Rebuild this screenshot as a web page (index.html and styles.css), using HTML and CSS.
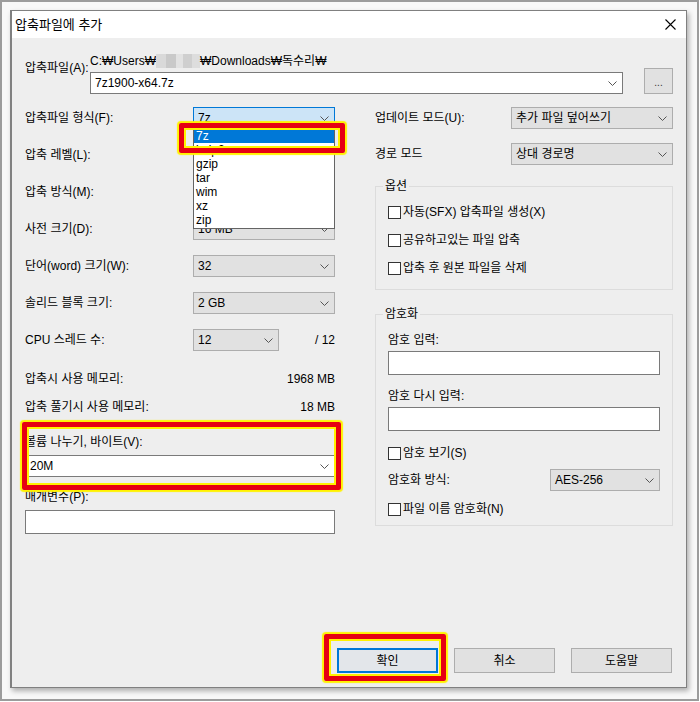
FILE: index.html
```html
<!DOCTYPE html>
<html lang="ko">
<head>
<meta charset="utf-8">
<title>압축파일에 추가</title>
<link rel="stylesheet" href="styles.css">
</head>
<body>
<div class="frame">
  <div class="window">
    <div class="titlebar">
      <span class="title">압축파일에 추가</span>
      <svg class="close" width="11" height="11" viewBox="0 0 11 11"><path d="M0.5 0.5L10.5 10.5M10.5 0.5L0.5 10.5" stroke="#000" stroke-width="1.1" fill="none"/></svg>
    </div>
    <div class="content">
      <div class="file-row">
        <div class="file-label">압축파일(A):</div>
        <div class="file-col">
          <div class="path">C:₩Users₩<span class="blur"></span>₩Downloads₩독수리₩</div>
          <div class="combo-row">
            <div class="select white file-combo"><span>7z1900-x64.7z</span><svg class="chev" width="9" height="5" viewBox="0 0 9 5"><path d="M0.5 0.5L4.5 4.5L8.5 0.5" fill="none" stroke="#555"/></svg></div>
            <div class="btn browse">...</div>
          </div>
        </div>
      </div>

      <div class="columns">
        <div class="left">
          <div class="srow">
            <span class="slabel">압축파일 형식(F):</span>
            <div class="select open w142"><span>7z</span><svg class="chev" width="9" height="5" viewBox="0 0 9 5"><path d="M0.5 0.5L4.5 4.5L8.5 0.5" fill="none" stroke="#555"/></svg>
              <div class="dropdown">
                <div class="opt sel">7z</div>
                <div class="opt">bzip2</div>
                <div class="opt">gzip</div>
                <div class="opt">tar</div>
                <div class="opt">wim</div>
                <div class="opt">xz</div>
                <div class="opt">zip</div>
              </div>
            </div>
          </div>
          <div class="srow">
            <span class="slabel">압축 레벨(L):</span>
            <div class="select w142"><span></span><svg class="chev" width="9" height="5" viewBox="0 0 9 5"><path d="M0.5 0.5L4.5 4.5L8.5 0.5" fill="none" stroke="#555"/></svg></div>
          </div>
          <div class="srow">
            <span class="slabel">압축 방식(M):</span>
            <div class="select w142"><span></span><svg class="chev" width="9" height="5" viewBox="0 0 9 5"><path d="M0.5 0.5L4.5 4.5L8.5 0.5" fill="none" stroke="#555"/></svg></div>
          </div>
          <div class="srow">
            <span class="slabel">사전 크기(D):</span>
            <div class="select w142"><span>16 MB</span><svg class="chev" width="9" height="5" viewBox="0 0 9 5"><path d="M0.5 0.5L4.5 4.5L8.5 0.5" fill="none" stroke="#555"/></svg></div>
          </div>
          <div class="srow">
            <span class="slabel">단어(word) 크기(W):</span>
            <div class="select w142"><span>32</span><svg class="chev" width="9" height="5" viewBox="0 0 9 5"><path d="M0.5 0.5L4.5 4.5L8.5 0.5" fill="none" stroke="#555"/></svg></div>
          </div>
          <div class="srow">
            <span class="slabel">솔리드 블록 크기:</span>
            <div class="select w142"><span>2 GB</span><svg class="chev" width="9" height="5" viewBox="0 0 9 5"><path d="M0.5 0.5L4.5 4.5L8.5 0.5" fill="none" stroke="#555"/></svg></div>
          </div>
          <div class="srow">
            <span class="slabel">CPU 스레드 수:</span>
            <div class="select w86"><span>12</span><svg class="chev" width="9" height="5" viewBox="0 0 9 5"><path d="M0.5 0.5L4.5 4.5L8.5 0.5" fill="none" stroke="#555"/></svg></div>
            <span class="threads">/ 12</span>
          </div>
          <div class="mem mem1"><span>압축시 사용 메모리:</span><span>1968 MB</span></div>
          <div class="mem mem2"><span>압축 풀기시 사용 메모리:</span><span>18 MB</span></div>
          <div class="vol-label">볼륨 나누기, 바이트(V):</div>
          <div class="select white vol-combo"><span>20M</span><svg class="chev" width="9" height="5" viewBox="0 0 9 5"><path d="M0.5 0.5L4.5 4.5L8.5 0.5" fill="none" stroke="#555"/></svg></div>
          <div class="param-label">매개변수(P):</div>
          <div class="input param-input"></div>
        </div>

        <div class="right">
          <div class="rrow">
            <span class="rlabel">업데이트 모드(U):</span>
            <div class="select w162"><span>추가 파일 덮어쓰기</span><svg class="chev" width="9" height="5" viewBox="0 0 9 5"><path d="M0.5 0.5L4.5 4.5L8.5 0.5" fill="none" stroke="#555"/></svg></div>
          </div>
          <div class="rrow rrow2">
            <span class="rlabel">경로 모드</span>
            <div class="select w162"><span>상대 경로명</span><svg class="chev" width="9" height="5" viewBox="0 0 9 5"><path d="M0.5 0.5L4.5 4.5L8.5 0.5" fill="none" stroke="#555"/></svg></div>
          </div>
          <fieldset class="group options">
            <legend>옵션</legend>
            <div class="cbrow"><span class="cb"></span><span>자동(SFX) 압축파일 생성(X)</span></div>
            <div class="cbrow gap14"><span class="cb"></span><span>공유하고있는 파일 압축</span></div>
            <div class="cbrow gap14"><span class="cb"></span><span>압축 후 원본 파일을 삭제</span></div>
          </fieldset>
          <fieldset class="group enc">
            <legend>암호화</legend>
            <div class="enc-label">암호 입력:</div>
            <div class="input pw"></div>
            <div class="enc-label enc-label2">암호 다시 입력:</div>
            <div class="input pw"></div>
            <div class="cbrow show-pw"><span class="cb"></span><span>암호 보기(S)</span></div>
            <div class="method-row">
              <span>암호화 방식:</span>
              <div class="select w110"><span>AES-256</span><svg class="chev" width="9" height="5" viewBox="0 0 9 5"><path d="M0.5 0.5L4.5 4.5L8.5 0.5" fill="none" stroke="#555"/></svg></div>
            </div>
            <div class="cbrow enc-names"><span class="cb"></span><span>파일 이름 암호화(N)</span></div>
          </fieldset>
        </div>
      </div>

      <div class="buttons">
        <div class="btn action default">확인</div>
        <div class="btn action">취소</div>
        <div class="btn action">도움말</div>
      </div>
    </div>

    <div class="hl hl-format"></div>
    <div class="hl hl-volume"></div>
    <div class="hl hl-ok"></div>
  </div>
</div>
</body>
</html>
```

FILE: styles.css
```css
* { box-sizing: border-box; }

html, body { margin: 0; padding: 0; }

body {
  width: 700px;
  height: 702px;
  background: #ffffff;
  font-family: "Liberation Sans", "Noto Sans CJK KR", sans-serif;
  font-size: 12px;
  line-height: 14px;
  color: #000;
  overflow: hidden;
}

.frame {
  width: 699px;
  height: 701px;
  border: 2px solid #9c9c9c;
  background: #f8f8f8;
  padding: 8px 0 0 8px;
}

.window {
  position: relative;
  width: 677px;
  height: 678px;
  border: 1px solid #808080;
  border-left-width: 2px;
  background: #eeeeee;
  box-shadow: 2px 3px 5px rgba(0, 0, 0, 0.3);
  display: flex;
  flex-direction: column;
}

.titlebar {
  height: 27px;
  background: #ffffff;
  display: flex;
  align-items: center;
  justify-content: space-between;
  padding: 0 10px 0 3px;
  flex: none;
}

.title { font-size: 13px; }

.content {
  flex: 1;
  display: flex;
  flex-direction: column;
  padding: 16px 13px 14px 13px;
}

/* generic select */
.select {
  position: relative;
  display: flex;
  align-items: center;
  justify-content: space-between;
  height: 22px;
  border: 1px solid #adadad;
  background: #e1e1e1;
  padding: 0 5px 0 4px;
  white-space: nowrap;
  flex: none;
}
.select.white { background: #ffffff; border-color: #7a7a7a; }
.select.open { background: #cce4f7; border-color: #0078d7; z-index: 5; }
.chev { flex: none; }
.w142 { width: 142px; }
.w86 { width: 86px; }
.w162 { width: 162px; }
.w110 { width: 110px; }

/* file row */
.file-row { display: flex; }
.file-label { width: 65px; padding-top: 7px; white-space: nowrap; }
.file-col { flex: 1; display: flex; flex-direction: column; }
.path { height: 14px; white-space: nowrap; display: flex; align-items: center; }
.blur {
  display: inline-block;
  width: 44px;
  height: 14px;
  background:
    linear-gradient(90deg, #d9d9d9 0 22%, #c9c9c9 22% 45%, #e2e2e2 45% 62%, #cfcfcf 62% 82%, #dddddd 82%);
}
.combo-row { display: flex; align-items: flex-end; gap: 21px; }
.select.file-combo { flex: 1 1 auto; }

.btn {
  display: flex;
  align-items: center;
  justify-content: center;
  background: #e1e1e1;
  border: 1px solid #adadad;
}
.browse { width: 29px; height: 26px; font-size: 10px; padding-top: 3px; color: #333; flex: none; }

/* dropdown list */
.dropdown {
  position: absolute;
  left: -1px;
  top: 20px;
  width: 142px;
  background: #ffffff;
  border: 1px solid #646464;
  padding-bottom: 1px;
}
.opt { height: 14px; line-height: 14px; padding-left: 2px; }
.opt.sel { background: #0078d7; color: #ffffff; }

/* columns */
.columns {
  display: grid;
  grid-template-columns: 310px 298px;
  column-gap: 40px;
  margin-top: 13px;
}

.left { display: flex; flex-direction: column; }
.srow { display: flex; align-items: center; height: 22px; margin-bottom: 15px; }
.slabel { width: 168px; white-space: nowrap; }
.threads { margin-left: auto; }
.mem { display: flex; justify-content: space-between; }
.mem1 { margin-top: 6px; }
.mem2 { margin-top: 14px; }
.vol-label { margin-top: 21px; }
.vol-combo { margin-top: 6px; width: 100%; }
.param-label { margin-top: 13px; }
.input { background: #ffffff; border: 1px solid #7a7a7a; }
.param-input { margin-top: 6px; height: 24px; width: 100%; }

.right { display: flex; flex-direction: column; }
.rrow { display: flex; align-items: center; height: 22px; }
.rrow2 { margin-top: 14px; }
.rlabel { width: 136px; white-space: nowrap; }

.group {
  margin: 0;
  border: 1px solid #dcdcdc;
  min-width: 0;
}
.group legend { padding: 0 2px; margin-left: -5px; line-height: 14px; }
.options { margin-top: 14px; padding: 12px 12px 14px 12px; }
.enc { margin-top: 17px; padding: 12px 12px 9px 12px; }

.cbrow { display: flex; align-items: center; gap: 2px; height: 14px; white-space: nowrap; }
.gap14 { margin-top: 14px; }
.cb {
  width: 13px;
  height: 13px;
  border: 1px solid #333333;
  background: #ffffff;
  flex: none;
}

.pw { margin-top: 4px; height: 24px; width: 100%; }
.enc-label2 { margin-top: 14px; }
.show-pw { margin-top: 15px; }
.method-row { display: flex; align-items: center; justify-content: space-between; height: 22px; margin-top: 9px; }
.enc-names { margin-top: 11px; }

/* bottom buttons */
.buttons {
  margin-top: auto;
  display: flex;
  justify-content: flex-end;
  gap: 16px;
  padding-right: 1px;
}
.action { width: 101px; height: 25px; }
.action.default { border-color: #0078d7; box-shadow: inset 0 0 0 1px #0078d7; background: #e3e6ea; }

/* annotation highlights */
.hl {
  position: absolute;
  z-index: 10;
  border: 5px solid #e60012;
  border-radius: 2px;
  box-shadow: 0 0 1px 2px #fff200, inset 0 0 0 2px #fff200;
}
.hl-format { left: 167px; top: 112px; width: 166px; height: 30px; }
.hl-volume { left: 10px; top: 411px; width: 319px; height: 68px; }
.hl-ok { left: 312px; top: 623px; width: 122px; height: 47px; }
```
